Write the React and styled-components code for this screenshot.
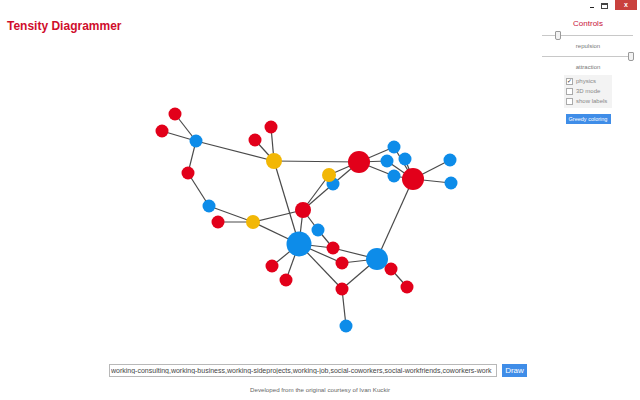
import React from 'react';
import styled, { createGlobalStyle } from 'styled-components';

const RED = '#e2001a';
const BLUE = '#0d8ce9';
const YELLOW = '#f2b705';

const nodes = {
  a: [175, 114, 6.5, RED], b: [162, 131, 6.5, RED], c: [188, 173, 6.5, RED],
  d: [218, 222, 6.5, RED], e: [271, 127, 6.5, RED], f: [255, 140, 6.5, RED],
  g: [333, 248, 6.5, RED], h: [342, 263, 6.5, RED], i: [272, 266, 6.5, RED],
  j: [286, 280, 6.5, RED], k: [342, 289, 6.5, RED], l: [391, 269, 6.5, RED],
  m: [407, 287, 6.5, RED], n: [359, 162, 11, RED], o: [413, 179, 11, RED],
  p: [303, 210, 8, RED],
  q: [196, 141, 6.5, BLUE], r: [209, 206, 6.5, BLUE], s: [333, 184, 6.5, BLUE],
  t: [318, 230, 6.5, BLUE], u: [394, 147, 6.5, BLUE], v: [387, 161, 6.5, BLUE],
  w: [405, 159, 6.5, BLUE], x: [394, 176, 6.5, BLUE], y: [450, 160, 6.5, BLUE],
  z: [451, 183, 6.5, BLUE], aa: [346, 326, 6.5, BLUE],
  bb: [299, 244, 12.5, BLUE], cc: [377, 259, 11, BLUE],
  dd: [274, 161, 8, YELLOW], ee: [329, 175, 7, YELLOW], ff: [253, 222, 7, YELLOW],
};

const edges = [
  ['a', 'q'], ['b', 'q'], ['q', 'c'], ['q', 'dd'], ['c', 'r'], ['r', 'ff'],
  ['d', 'ff'], ['e', 'dd'], ['f', 'dd'], ['dd', 'n'], ['dd', 'bb'], ['ff', 'p'],
  ['ff', 'bb'], ['ee', 'p'], ['s', 'p'], ['ee', 'n'], ['s', 'n'], ['n', 'u'],
  ['n', 'v'], ['n', 'x'], ['o', 'u'], ['o', 'v'], ['o', 'w'], ['o', 'x'],
  ['o', 'y'], ['o', 'z'], ['o', 'cc'], ['p', 'bb'], ['p', 't'], ['t', 'g'],
  ['g', 'cc'], ['bb', 'g'], ['bb', 'h'], ['bb', 'i'], ['bb', 'j'], ['bb', 'k'],
  ['h', 'cc'], ['cc', 'k'], ['cc', 'l'], ['l', 'm'], ['k', 'aa'],
];

const GlobalStyle = createGlobalStyle`
  html, body {
    margin: 0;
    padding: 0;
    background: #fff;
  }
  body {
    font-family: "Liberation Sans", Arial, sans-serif;
  }
`;

class App extends React.Component {
  render() {
    return (
      <Page>
        <GlobalStyle />
        <Chrome>
          <Minimize />
          <Maximize />
          <Close>x</Close>
        </Chrome>
        <Top>
          <Left>
            <Title>Tensity Diagrammer</Title>
            <Graph width="540" height="324" viewBox="0 34 540 324">
              {edges.map(([from, to]) => (
                <line
                  key={from + to}
                  x1={nodes[from][0]} y1={nodes[from][1]}
                  x2={nodes[to][0]} y2={nodes[to][1]}
                  stroke="#4a4a4a" strokeWidth="1.2"
                />
              ))}
              {Object.keys(nodes).map((id) => (
                <circle key={id} cx={nodes[id][0]} cy={nodes[id][1]} r={nodes[id][2]} fill={nodes[id][3]} />
              ))}
            </Graph>
          </Left>
          <Controls>
            <PanelTitle>Controls</PanelTitle>
            <Slider><Thumb pos={17} /></Slider>
            <SliderLabel>repulsion</SliderLabel>
            <Slider><Thumb pos={97} /></Slider>
            <SliderLabel>attraction</SliderLabel>
            <Options>
              <Option><Box>✓</Box>physics</Option>
              <Option><Box />3D mode</Option>
              <Option><Box />show labels</Option>
            </Options>
            <Greedy>Greedy coloring</Greedy>
          </Controls>
        </Top>
        <Form>
          <Input readOnly value="working-consulting,working-business,working-sideprojects,working-job,social-coworkers,social-workfriends,coworkers-work" />
          <Draw>Draw</Draw>
        </Form>
        <Footer>Developed from the original  courtesy of Ivan Kuckir</Footer>
      </Page>
    );
  }
}

export default App;

const Page = styled.div`
  position: relative;
  width: 640px;
  height: 400px;
  display: flex;
  flex-direction: column;
  overflow: hidden;
`
const Chrome = styled.div`
  position: absolute;
  top: 0;
  right: 3px;
  display: flex;
  align-items: flex-start;
  gap: 7px;
`
const Minimize = styled.div`
  width: 4px;
  height: 1px;
  margin-top: 7px;
  background: #222;
`
const Maximize = styled.div`
  width: 5px;
  height: 3px;
  margin-top: 3px;
  border: 1px solid #444;
  border-top-width: 2px;
`
const Close = styled.div`
  width: 22px;
  height: 10px;
  background: #c9413d;
  color: #fff;
  font-size: 7px;
  font-weight: bold;
  line-height: 9px;
  text-align: center;
`
const Top = styled.div`
  display: grid;
  grid-template-columns: 540px 100px;
  height: 358px;
`
const Left = styled.div`
  display: flex;
  flex-direction: column;
`
const Title = styled.div`
  padding: 18px 0 0 7px;
  height: 16px;
  font-size: 12px;
  line-height: 16px;
  font-weight: bold;
  color: #cf0d2c;
`
const Graph = styled.svg`
  display: block;
`
const Controls = styled.div`
  display: flex;
  flex-direction: column;
  align-items: center;
  padding-top: 19px;
`
const PanelTitle = styled.div`
  font-size: 8px;
  line-height: 10px;
  color: #c8103a;
  margin-left: -4px;
`
const Slider = styled.div`
  position: relative;
  width: 91px;
  height: 1px;
  margin: 6px 0 0 -6px;
  background: #c8c8c8;
`
const Thumb = styled.div`
  position: absolute;
  top: -4px;
  left: ${p => p.pos}%;
  width: 4px;
  height: 7px;
  margin-left: -2px;
  border: 1px solid #9a9a9a;
  border-radius: 1px 1px 2px 2px;
  background: #f2f2f2;
`
const SliderLabel = styled.div`
  margin: 7px 0 0 -4px;
  font-size: 6px;
  line-height: 7px;
  color: #777;
`
const Options = styled.div`
  display: flex;
  flex-direction: column;
  gap: 3px;
  width: 44px;
  margin: 4px 0 0 -4px;
  padding: 3px 2px 3px 2px;
  background: #f3f3f3;
`
const Option = styled.div`
  display: flex;
  align-items: center;
  gap: 3px;
  font-size: 6px;
  line-height: 7px;
  color: #888;
  white-space: nowrap;
`
const Box = styled.span`
  display: inline-flex;
  align-items: center;
  justify-content: center;
  width: 5px;
  height: 5px;
  border: 1px solid #aaa;
  background: #fff;
  color: #333;
  font-size: 6px;
  line-height: 5px;
`
const Greedy = styled.div`
  margin: 6px 0 0 -4px;
  width: 45px;
  height: 10px;
  background: #3f8de8;
  color: #fff;
  font-size: 5.5px;
  line-height: 10px;
  text-align: center;
  white-space: nowrap;
`
const Form = styled.div`
  display: flex;
  justify-content: center;
  gap: 5px;
  padding-top: 6px;
  padding-right: 4px;
`
const Input = styled.input`
  box-sizing: border-box;
  width: 388px;
  height: 13px;
  padding: 0 1px;
  border: 1px solid #b8b8b8;
  font-family: "Liberation Sans", Arial, sans-serif;
  font-size: 7px;
  color: #444;
  outline: none;
`
const Draw = styled.div`
  width: 25px;
  height: 13px;
  background: #3f8de8;
  color: #fff;
  font-size: 8px;
  line-height: 13px;
  text-align: center;
`
const Footer = styled.div`
  margin-top: 9px;
  text-align: center;
  font-size: 6.2px;
  color: #666;
`
